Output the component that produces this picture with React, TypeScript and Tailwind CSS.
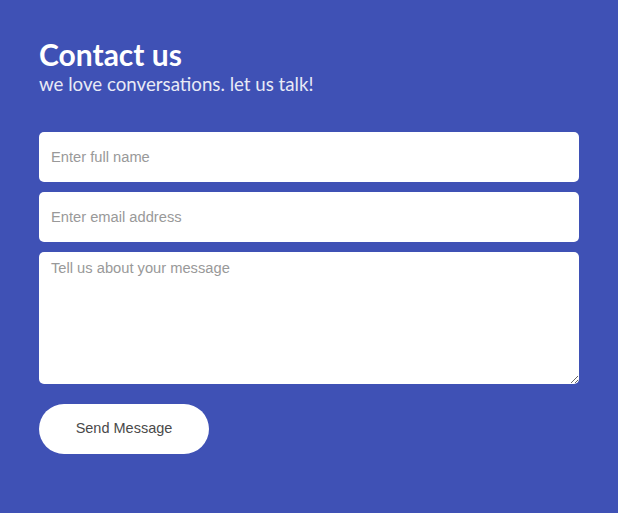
import React from 'react';

const ContactForm = () => {
  return (
    <div className="min-h-[513px] w-full bg-[#3f51b5] px-[39px] pt-[37px] pb-[59px] font-['Lato',sans-serif]">
      {/* Header */}
      <h1 className="text-[30px] font-bold leading-[35px] text-white">Contact us</h1>
      <p className="text-[18.7px] leading-[24px] text-[#e8eaf6]">we love conversations. let us talk!</p>

      {/* Form */}
      <form className="mt-[36px] flex flex-col gap-[10px]" onSubmit={(e) => e.preventDefault()}>
        <input
          type="text"
          placeholder="Enter full name"
          className="h-[50px] w-full rounded-[5px] bg-white px-[12px] font-['Liberation_Sans',sans-serif] text-[14.7px] text-[#333] outline-none placeholder:text-[#999]"
        />
        <input
          type="email"
          placeholder="Enter email address"
          className="h-[50px] w-full rounded-[5px] bg-white px-[12px] font-['Liberation_Sans',sans-serif] text-[14.7px] text-[#333] outline-none placeholder:text-[#999]"
        />
        <textarea
          placeholder="Tell us about your message"
          className="h-[132px] w-full rounded-[5px] bg-white px-[12px] pt-[5px] pb-[7px] font-['Liberation_Sans',sans-serif] text-[14.7px] text-[#333] outline-none placeholder:text-[#999]"
        />
        <div className="mt-[10px]">
          <button
            type="submit"
            className="h-[50px] w-[170px] rounded-full bg-white font-['Liberation_Sans',sans-serif] text-[14.5px] text-[#4a4a4a]"
          >
            Send Message
          </button>
        </div>
      </form>
    </div>
  );
};

export default function App() {
  return <ContactForm />;
}
